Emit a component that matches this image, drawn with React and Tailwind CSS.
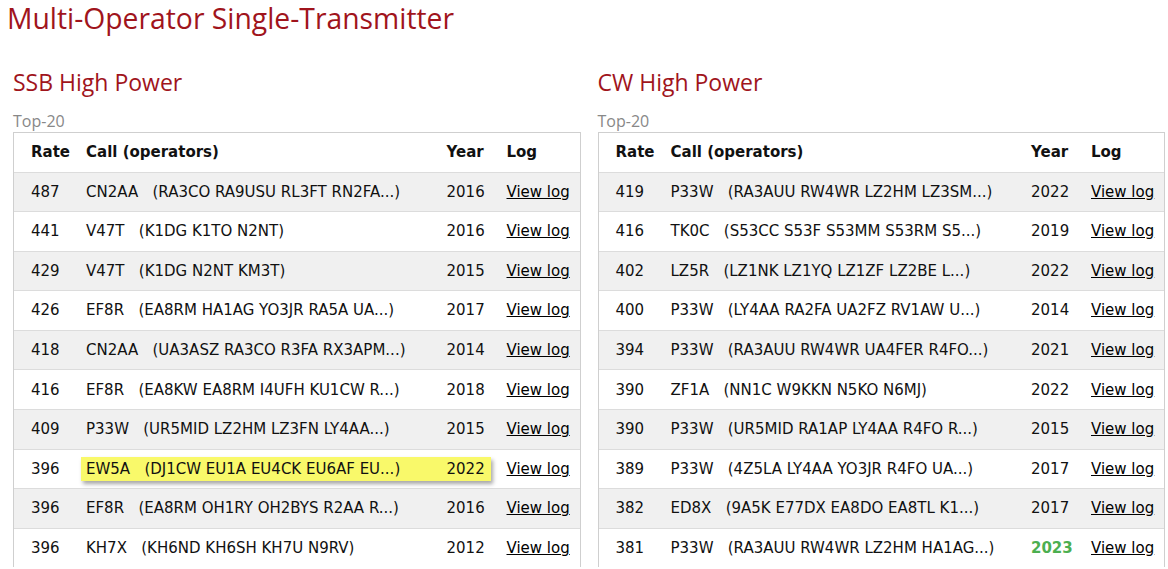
import React from "react";

const ssb = [
    ["487", "CN2AA", "RA3CO RA9USU RL3FT RN2FA...", "2016"],
    ["441", "V47T", "K1DG K1TO N2NT", "2016"],
    ["429", "V47T", "K1DG N2NT KM3T", "2015"],
    ["426", "EF8R", "EA8RM HA1AG YO3JR RA5A UA...", "2017"],
    ["418", "CN2AA", "UA3ASZ RA3CO R3FA RX3APM...", "2014"],
    ["416", "EF8R", "EA8KW EA8RM I4UFH KU1CW R...", "2018"],
    ["409", "P33W", "UR5MID LZ2HM LZ3FN LY4AA...", "2015"],
    ["396", "EW5A", "DJ1CW EU1A EU4CK EU6AF EU...", "2022", "mark"],
    ["396", "EF8R", "EA8RM OH1RY OH2BYS R2AA R...", "2016"],
    ["396", "KH7X", "KH6ND KH6SH KH7U N9RV", "2012"],
];

const cw = [
    ["419", "P33W", "RA3AUU RW4WR LZ2HM LZ3SM...", "2022"],
    ["416", "TK0C", "S53CC S53F S53MM S53RM S5...", "2019"],
    ["402", "LZ5R", "LZ1NK LZ1YQ LZ1ZF LZ2BE L...", "2022"],
    ["400", "P33W", "LY4AA RA2FA UA2FZ RV1AW U...", "2014"],
    ["394", "P33W", "RA3AUU RW4WR UA4FER R4FO...", "2021"],
    ["390", "ZF1A", "NN1C W9KKN N5KO N6MJ", "2022"],
    ["390", "P33W", "UR5MID RA1AP LY4AA R4FO R...", "2015"],
    ["389", "P33W", "4Z5LA LY4AA YO3JR R4FO UA...", "2017"],
    ["382", "ED8X", "9A5K E77DX EA8DO EA8TL K1...", "2017"],
    ["381", "P33W", "RA3AUU RW4WR LZ2HM HA1AG...", "2023", "new"],
];

const Row = ({ r, i }) => {
    const [rate, call, ops, year, flag] = r;
    const bg = i % 2 === 0 ? "bg-[#f0f0f0]" : "bg-white";
    const callText = (
        <span className="whitespace-pre">{`${call}   (${ops})`}</span>
    );
    return (
        <div className={`grid grid-cols-[67px_1fr_50px_89px] h-[39.6px] items-center border-t border-[#dcdcdc] ${bg}`}>
            <div className="pl-[17px]">{rate}</div>
            {flag === "mark" ? (
                <div className="col-span-2 grid grid-cols-[1fr_50px] items-center h-[24px] bg-[#f9f96a] shadow-[2px_3px_4px_rgba(0,0,0,0.35)]">
                    <div className="pl-[5px]">{callText}</div>
                    <div className="pl-[6px]">{year}</div>
                </div>
            ) : (
                <>
                    <div className="pl-[5px]">{callText}</div>
                    <div className={`pl-[6px] ${flag === "new" ? "font-bold text-[#4caf50]" : ""}`}>{year}</div>
                </>
            )}
            <div className="pl-[16px]">
                <a href="#" className="underline text-black">View log</a>
            </div>
        </div>
    );
};

const Section = ({ title, rows }) => (
    <div>
        <h2 className="text-[23px] leading-none text-[#a0141c] font-['Open_Sans',sans-serif] mt-[71px] h-[26px]">{title}</h2>
        <div className="text-[16px] text-[#888] font-['Open_Sans',sans-serif] mt-[13px] leading-[22px]">Top-20</div>
        <div className="border border-[#cfcfcf] border-b-0 text-[15px] text-[#111] font-['DejaVu_Sans',Verdana,sans-serif]">
            <div className="grid grid-cols-[67px_1fr_50px_89px] h-[38.5px] items-center font-bold">
                <div className="pl-[17px]">Rate</div>
                <div className="pl-[5px]">Call (operators)</div>
                <div className="pl-[6px]">Year</div>
                <div className="pl-[16px]">Log</div>
            </div>
            {rows.map((r, i) => (
                <Row key={i} r={r} i={i} />
            ))}
        </div>
    </div>
);

export default function App() {
    return (
        <div className="bg-white w-[1168px] h-[569px] overflow-hidden relative">
            <h1 className="absolute left-[7px] top-[0px] text-[28.3px] leading-[36px] text-[#a0141c] font-['Open_Sans',sans-serif]">
                Multi-Operator Single-Transmitter
            </h1>
            <div className="grid grid-cols-2 gap-[17px] pl-[13px] pr-[3px]">
                <Section title="SSB High Power" rows={ssb} />
                <Section title="CW High Power" rows={cw} />
            </div>
        </div>
    );
}
